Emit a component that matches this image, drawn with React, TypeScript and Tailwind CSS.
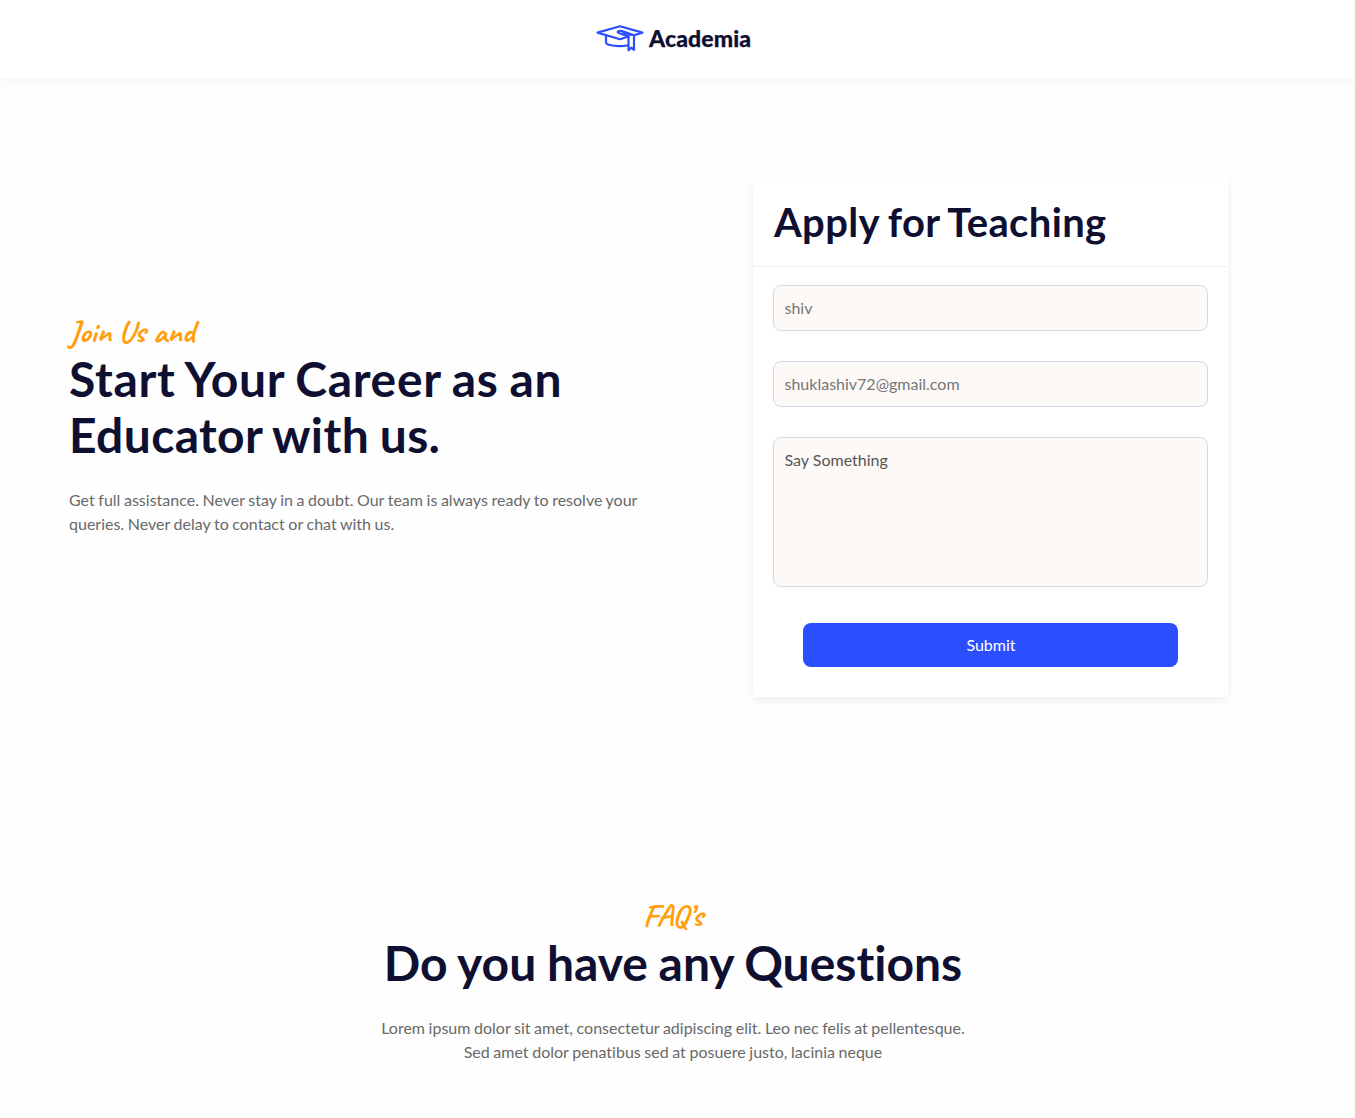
import React from "react";

function Logo() {
  return (
    <a href="#" className="flex h-[34px] w-[155px] items-center gap-[5px]">
      <svg
        className="mb-px h-[28px] w-[48px] shrink-0"
        viewBox="0 0 48 28"
        fill="none"
        stroke="#2b4eff"
        strokeWidth="2.2"
        strokeLinejoin="round"
        strokeLinecap="round"
      >
        <path d="M32.500 12.500 24 15.200 1.500 8.600 24 2.200 46.500 8.600 38 11.200" />
        <path d="M10 11.500v7c0 2 6 3.600 13 3.600 3.400 0 6.500-.3 9-.9" />
        <path d="M38 25.500V11.200L26 7.100c-3-.8-6 .6-3.200 1.900l9.700 3.500v13.800l2.700-2.600 2.800 2.200" />
        <path d="M27 8.800 35 11.300" strokeWidth="1.500" />
      </svg>
      <span className="text-[23px] leading-[33px] font-black tracking-[0.1px] text-[#0f1031] [-webkit-text-stroke:0.25px_#0f1031]">
        Academia
      </span>
    </a>
  );
}

function Accent({ children }: { children: React.ReactNode }) {
  return (
    <p className="h-[38px] font-[Caveat,cursive] text-[32px] leading-[38px] font-bold whitespace-nowrap text-[#ff9f0d] [word-spacing:-0.5px]">
      {children}
    </p>
  );
}

const field =
  "block w-full rounded-lg border border-[#d5d9e4] bg-[#fdf9f7] px-[10.5px] text-base leading-6 outline-none";

function ApplyForm() {
  return (
    <form className="h-[520px] w-[475px] bg-white shadow-[0_4px_6px_rgba(0,0,0,0.04),0_2px_18px_rgba(10,60,40,0.03)]">
      <h2 className="h-[90px] border-b border-[#eeeeef] px-[21px] pt-[21px] text-[40px] leading-[48px] font-bold tracking-[0.35px] text-[#0f1031] [word-spacing:-1.3px]">
        Apply for Teaching
      </h2>
      <div className="flex flex-col gap-[30px] px-5 pt-[18px]">
        <input type="text" placeholder="shiv" className={field + " h-[46px] pb-0.5 placeholder:text-[#757575]"} />
        <input
          type="email"
          placeholder="shuklashiv72@gmail.com"
          className={field + " h-[46px] pb-0.5 placeholder:text-[#757575]"}
        />
        <textarea
          defaultValue="Say Something"
          className={field + " h-[150px] resize-none py-[10px] text-[#555]"}
        />
      </div>
      <div className="px-[50px] pt-9">
        <button type="button" className="h-11 w-full rounded-lg bg-[#2b4eff] pl-px text-base text-white">
          Submit
        </button>
      </div>
    </form>
  );
}

export default function App() {
  return (
    <div className="h-[1118px] overflow-hidden bg-[#fefefe] font-[Lato,sans-serif] text-[#696969] [font-variant-ligatures:none] [word-spacing:-0.5px]">
      <header className="flex h-[78px] justify-center bg-white pt-[21px] pr-[8px] shadow-[0_3px_6px_rgba(0,0,0,0.02),0_4px_22px_rgba(10,60,40,0.025)]">
        <Logo />
      </header>
      <main>
        <section className="flex h-[718px] items-start pt-[99px] pl-[69px]">
          <div className="w-[684px] pt-[136px]">
            <Accent>Join Us and</Accent>
            <h1 className="text-5xl leading-[56px] font-bold text-[#0f1031] [word-spacing:-1.4px]">
              <span className="block tracking-[0.66px]">Start Your Career as an</span>
              <span className="block tracking-[0.37px]">Educator with us.</span>
            </h1>
            <p className="mt-[25px] w-[590px] text-base leading-6">
              Get full assistance. Never stay in a doubt. Our team is always ready to resolve your
              <br />
              queries. Never delay to contact or chat with us.
            </p>
          </div>
          <ApplyForm />
        </section>
        <section className="flex flex-col items-center pt-[101px] pr-[9px] text-center">
          <Accent>FAQ’s</Accent>
          <h2 className="text-5xl leading-[56px] font-bold text-[#0f1031] [word-spacing:-1px]">
            Do you have any Questions
          </h2>
          <p className="mt-[25px] text-base leading-6">
            Lorem ipsum dolor sit amet, consectetur adipiscing elit. Leo nec felis at pellentesque.
            <br />
            Sed amet dolor penatibus sed at posuere justo, lacinia neque
          </p>
        </section>
      </main>
    </div>
  );
}
